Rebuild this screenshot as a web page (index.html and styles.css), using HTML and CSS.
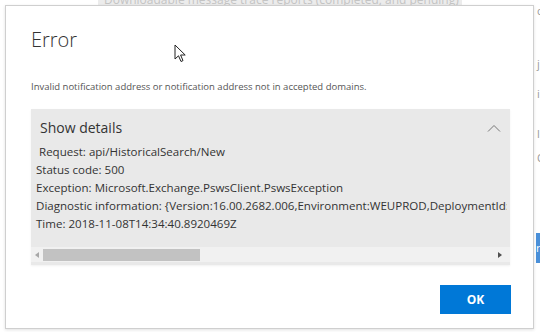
FILE: index.html
```html
<!DOCTYPE html>
<html lang="en">
<head>
  <meta charset="UTF-8" />
  <title>Error</title>
  <link rel="stylesheet" href="styles.css">
</head>
<body>
  <div class="page">
    <div class="page-bar">Downloadable message trace reports (completed, and pending)</div>
    <div class="page-side">
      <span class="side-c">c</span>
      <span class="side-j">j</span>
      <span class="side-i">i</span>
      <span class="side-l">l</span>
      <span class="side-q">Q</span>
      <span class="side-btn">r</span>
    </div>
  </div>

  <div class="dialog">
    <h1 class="dialog-title">Error</h1>
    <p class="dialog-message">Invalid notification address or notification address not in accepted domains.</p>

    <div class="details">
      <div class="details-head">
        <span>Show details</span>
        <svg class="chevron" width="14" height="8" viewBox="0 0 14 8">
          <path d="M1 7.5 L7 1.5 L13 7.5" fill="none" stroke="#777" stroke-width="1" />
        </svg>
      </div>
      <div class="details-body">
        <div class="line first">Request: api/HistoricalSearch/New</div>
        <div class="line">Status code: 500</div>
        <div class="line">Exception: Microsoft.Exchange.PswsClient.PswsException</div>
        <div class="line">Diagnostic information: {Version:16.00.2682.006,Environment:WEUPROD,DeploymentId:5c81a2f7-0ab6-4c5e-9ab7-07a3d0a4e1e2}</div>
        <div class="line">Time: 2018-11-08T14:34:40.8920469Z</div>
      </div>
      <div class="hscroll">
        <span class="arrow left"></span>
        <div class="track"><div class="thumb"></div></div>
        <span class="arrow right"></span>
      </div>
    </div>

    <div class="dialog-footer">
      <button class="ok-btn">OK</button>
    </div>
  </div>

  <svg class="cursor" width="13" height="19" viewBox="0 0 13 19">
    <path d="M1 1 L1 15 L4.5 11.8 L7 17.5 L9 16.6 L6.6 11 L11.2 11 Z" fill="#fff" stroke="#222" stroke-width="1" stroke-linejoin="round" />
  </svg>
</body>
</html>
```

FILE: styles.css
```css
html, body {
  margin: 0;
  padding: 0;
}
body {
  width: 540px;
  height: 332px;
  overflow: hidden;
  background: #fff;
  font-family: "Open Sans", "Noto Sans", sans-serif;
  position: relative;
}

/* page behind the modal */
.page {
  width: 540px;
  height: 332px;
  position: relative;
}
.page-bar {
  position: absolute;
  left: 98px;
  top: -6px;
  width: 358px;
  height: 11px;
  background: #ececec;
  color: #c4c4c4;
  font-size: 12px;
  line-height: 12px;
  padding-left: 6px;
  white-space: nowrap;
  overflow: hidden;
}
.page-side {
  position: absolute;
  left: 535px;
  top: 0;
  width: 10px;
  height: 332px;
  color: #999;
  font-size: 11px;
}
.page-side span { position: absolute; left: 2px; }
.side-c { top: 3px; }
.side-j { top: 56px; }
.side-i { top: 86px; }
.side-l { top: 126px; }
.side-q { top: 150px; }
.side-btn {
  top: 233px;
  left: 1px !important;
  width: 8px;
  height: 30px;
  background: #4a90d9;
  color: #fff;
  line-height: 30px;
}

/* modal */
.dialog {
  position: absolute;
  left: 5px;
  top: 5px;
  width: 479px;
  height: 322px;
  background: #fff;
  border: 1px solid #cfcfcf;
  box-shadow: 0 1px 3px rgba(0, 0, 0, 0.12);
  padding: 0 23px 0 25px;
  display: flex;
  flex-direction: column;
}
.dialog-title {
  margin: 22px 0 0;
  font-size: 20px;
  line-height: 24px;
  font-weight: 300;
  color: #333;
}
.dialog-message {
  margin: 28px 0 0;
  font-size: 9.5px;
  line-height: 14px;
  color: #555;
}

.details {
  margin-top: 15px;
  background: #e9e9e9;
  height: 156px;
  width: 479px;
  display: flex;
  flex-direction: column;
  box-shadow: 0 1px 2px rgba(0, 0, 0, 0.06);
}
.details-head {
  display: flex;
  justify-content: space-between;
  align-items: center;
  padding: 9px 9px 0 9px;
  height: 20px;
  font-size: 14px;
  line-height: 20px;
  color: #333;
}
.chevron { margin-top: -1px; }
.details-body {
  margin-top: 5px;
  padding-left: 5px;
  overflow: hidden;
  width: 471px;
  font-size: 11.55px;
  line-height: 18px;
  color: #333;
  white-space: nowrap;
}
.line.first { padding-left: 3px; }

.hscroll {
  margin-top: 14px;
  height: 15px;
  background: #f1f1f1;
  display: flex;
  align-items: center;
  padding: 0 8px 0 4px;
}
.track { flex: 1; height: 12px; margin: 0 4px; }
.thumb {
  width: 157px;
  height: 12px;
  background: #c2c2c2;
}
.arrow {
  width: 0;
  height: 0;
  border-top: 3px solid transparent;
  border-bottom: 3px solid transparent;
}
.arrow.left { border-right: 4px solid #a8a8a8; }
.arrow.right { border-left: 4px solid #505050; }

.dialog-footer {
  display: flex;
  justify-content: flex-end;
  margin-top: 20px;
  margin-right: -1px;
}
.ok-btn {
  width: 71px;
  height: 29px;
  border: none;
  background: #0078d7;
  color: #fff;
  font-family: "Open Sans", "Noto Sans", sans-serif;
  font-weight: 700;
  font-size: 12px;
  padding: 0;
}

.cursor {
  position: absolute;
  left: 174px;
  top: 44px;
}
```
